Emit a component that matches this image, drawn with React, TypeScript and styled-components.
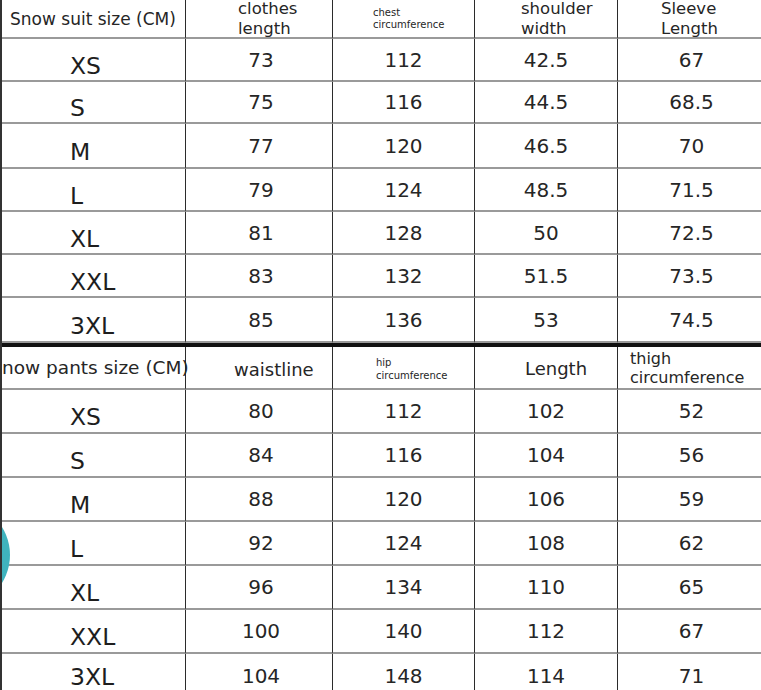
import React from "react";
import styled, { createGlobalStyle } from "styled-components";

const Global = createGlobalStyle`
  html, body { margin: 0; padding: 0; background: #ffffff; }
  body { font-family: "DejaVu Sans", "Noto Sans", sans-serif; color: #222; }
`;

const Page = styled.div`
  position: relative;
  width: 761px;
  height: 690px;
  overflow: hidden;
  background: #fff;
  border-left: 2px solid #333;
  box-sizing: border-box;
`;

const COLS = "184px 147px 142px 143px 145px";

const Grid = styled.div<{ $rows: string; $thick?: boolean }>`
  display: grid;
  grid-template-columns: ${COLS};
  grid-template-rows: ${(p) => p.$rows};
  border-bottom: ${(p) => (p.$thick ? "4px solid #111" : "none")};
`;

const Cell = styled.div<{ $last?: boolean; $noBottom?: boolean }>`
  position: relative;
  box-sizing: border-box;
  border-right: ${(p) => (p.$last ? "none" : "1.5px solid #2b2b2b")};
  border-bottom: ${(p) => (p.$noBottom ? "none" : "2px solid #9a9a9a")};
  display: flex;
  align-items: center;
  min-width: 0;
`;

const SizeCell = styled(Cell)<{ $lift?: number }>`
  padding-left: 68px;
  padding-top: ${(p) => 12 - (p.$lift ?? 0)}px;
  font-size: 23.5px;
  color: #1e1e1e;
`;

const ValueCell = styled(Cell)<{ $shift?: number }>`
  justify-content: center;
  font-size: 20px;
  color: #262626;
  padding-left: ${(p) => (p.$shift ?? 0) * 2}px;
`;

const HeadCell = styled(Cell)<{ $pad: number; $size: number; $lh: number; $top?: number }>`
  padding-left: ${(p) => p.$pad}px;
  padding-top: ${(p) => p.$top ?? 0}px;
  font-size: ${(p) => p.$size}px;
  line-height: ${(p) => p.$lh}px;
  color: #262626;
  white-space: nowrap;
  overflow: visible;
  z-index: 1;
`;

const Lines = styled.div`
  display: flex;
  flex-direction: column;
`;

const Badge = styled.div`
  position: absolute;
  left: -98px;
  top: 502px;
  width: 106px;
  height: 106px;
  border-radius: 50%;
  background: #3fb3bd;
`;

type Row = [string, string, string, string, string];

const suit: Row[] = [
  ["XS", "73", "112", "42.5", "67"],
  ["S", "75", "116", "44.5", "68.5"],
  ["M", "77", "120", "46.5", "70"],
  ["L", "79", "124", "48.5", "71.5"],
  ["XL", "81", "128", "50", "72.5"],
  ["XXL", "83", "132", "51.5", "73.5"],
  ["3XL", "85", "136", "53", "74.5"],
];

const pants: Row[] = [
  ["XS", "80", "112", "102", "52"],
  ["S", "84", "116", "104", "56"],
  ["M", "88", "120", "106", "59"],
  ["L", "92", "124", "108", "62"],
  ["XL", "96", "134", "110", "65"],
  ["XXL", "100", "140", "112", "67"],
  ["3XL", "104", "148", "114", "71"],
];

function Body({ rows, lastOpen }: { rows: Row[]; lastOpen?: boolean }) {
  return (
    <>
      {rows.map((r, i) => {
        const isLast = i === rows.length - 1;
        const nb = isLast && !!lastOpen;
        return (
          <React.Fragment key={r[0]}>
            <SizeCell $noBottom={nb} $lift={nb ? 10 : 0}>{r[0]}</SizeCell>
            <ValueCell $noBottom={nb} $shift={2}>{r[1]}</ValueCell>
            <ValueCell $noBottom={nb} $shift={-2}>{r[2]}</ValueCell>
            <ValueCell $noBottom={nb}>{r[3]}</ValueCell>
            <ValueCell $noBottom={nb} $last $shift={1}>{r[4]}</ValueCell>
          </React.Fragment>
        );
      })}
    </>
  );
}

export default function App() {
  return (
    <>
      <Global />
      <Page>
        <Grid $thick $rows="39px 43px 42px 45px 43px 43px 43px 45px">
          <HeadCell $pad={8} $size={17} $lh={20}>Snow suit size (CM)</HeadCell>
          <HeadCell $pad={52} $size={16.5} $lh={19.5} $top={0}>
            <Lines><span>clothes</span><span>length</span></Lines>
          </HeadCell>
          <HeadCell $pad={40} $size={10} $lh={12} $top={1}>
            <Lines><span>chest</span><span>circumference</span></Lines>
          </HeadCell>
          <HeadCell $pad={46} $size={16.5} $lh={19.5} $top={0}>
            <Lines><span>shoulder</span><span>width</span></Lines>
          </HeadCell>
          <HeadCell $pad={43} $size={16.5} $lh={19.5} $last $top={0}>
            <Lines><span>Sleeve</span><span>Length</span></Lines>
          </HeadCell>
          <Body rows={suit} />
        </Grid>
        <Grid $rows="43px 44px 44px 44px 44px 44px 44px 44px">
          <HeadCell $pad={0} $size={18.5} $lh={22}>now pants size (CM)</HeadCell>
          <HeadCell $pad={48} $size={18} $lh={22} $top={4}>waistline</HeadCell>
          <HeadCell $pad={43} $size={10} $lh={13} $top={2}>
            <Lines><span>hip</span><span>circumference</span></Lines>
          </HeadCell>
          <HeadCell $pad={50} $size={18} $lh={22} $top={3}>Length</HeadCell>
          <HeadCell $pad={12} $size={16} $lh={18.5} $last $top={2}>
            <Lines><span>thigh</span><span>circumference</span></Lines>
          </HeadCell>
          <Body rows={pants} lastOpen />
        </Grid>
        <Badge />
      </Page>
    </>
  );
}
